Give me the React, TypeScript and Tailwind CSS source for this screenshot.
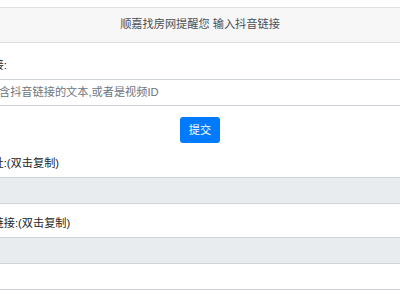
const fieldBase =
  'block w-full h-[26.6px] px-[8.4px] border border-[#ced4da] rounded-[3px] text-[11.2px] leading-[16.8px] text-[#495057] outline-none placeholder:text-[#6c757d]';

function Label({ children }: { children: React.ReactNode }) {
  return <label className="block mb-[5.6px] pl-[3px] text-[11.2px] leading-[16.8px] text-[#212529]">{children}</label>;
}

export default function App() {
  return (
    <div className="w-[400px] h-[300px] overflow-hidden bg-white font-['Liberation_Sans','Noto_Sans_CJK_SC',sans-serif]">
      <div className="w-[518px] -ml-[59px] mt-[7px] border border-[#dfdfdf] rounded-[3px] bg-white">
        <div className="px-[14px] py-[8.4px] bg-[#f7f7f7] border-b border-[#dfdfdf] text-center text-[11.2px] leading-[16.8px] text-[#495057]">
          顺嘉找房网提醒您 输入抖音链接
        </div>
        <div className="p-[14px]">
          <div className="mb-[11.2px]">
            <Label>抖音链接:</Label>
            <input className={fieldBase} placeholder="请输入含抖音链接的文本,或者是视频ID" />
          </div>
          <div className="mb-[11.2px] flex justify-center">
            <button className="h-[26.6px] px-[8.4px] rounded-[3px] bg-[#007bff] text-white text-[11.2px] leading-[16.8px]">
              提交
            </button>
          </div>
          <div className="mb-[11.2px]">
            <Label>视频地址:(双击复制)</Label>
            <input className={`${fieldBase} bg-[#e9ecef]`} readOnly />
          </div>
          <div className="mb-[11.2px]">
            <Label>无水印链接:(双击复制)</Label>
            <input className={`${fieldBase} bg-[#e9ecef] rounded-b-none`} readOnly />
            <input className={`${fieldBase} border-t-0 rounded-t-none h-[25.6px]`} readOnly />
          </div>
        </div>
      </div>
    </div>
  );
}
